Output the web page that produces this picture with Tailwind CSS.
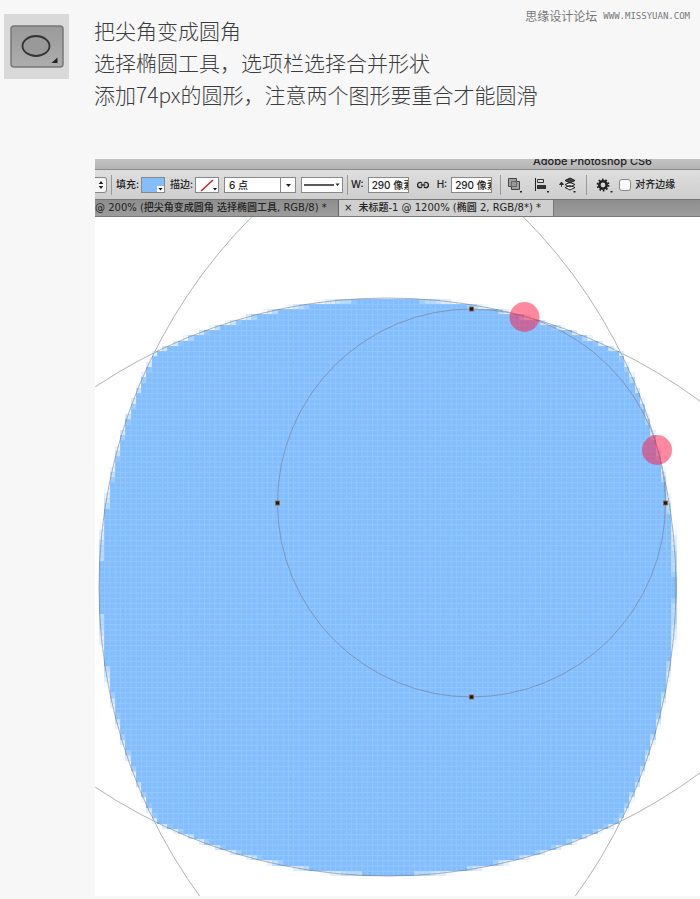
<!DOCTYPE html>
<html lang="zh-CN">
<head>
    <meta charset="UTF-8">
    <meta name="viewport" content="width=device-width, initial-scale=1.0">
    <title>把尖角变成圆角</title>
    <script src="https://cdn.jsdelivr.net/npm/@tailwindcss/browser@4"></script>
</head>
<body class="bg-[#f7f7f7] min-h-screen overflow-x-hidden font-['Noto_Sans_CJK_SC',sans-serif]">
    <!-- Intro -->
    <header class="relative flex items-start pl-1 pt-[14px] pb-[49px]">
        <div class="w-[65px] h-[65px] shrink-0 bg-[#d9d9d9] flex items-center justify-center">
            <svg class="w-[54px] h-[43px]" viewBox="0 0 54 43" aria-label="椭圆工具">
                <defs>
                    <linearGradient id="key" x1="0" y1="0" x2="0" y2="1">
                        <stop offset="0" stop-color="#9a9a9a"/>
                        <stop offset="1" stop-color="#adadad"/>
                    </linearGradient>
                </defs>
                <rect x="1" y="1" width="52" height="41" rx="3" fill="url(#key)" stroke="#777" stroke-width="1.5"/>
                <ellipse cx="26" cy="21" rx="13.5" ry="10" fill="#999" stroke="#333" stroke-width="1.8"/>
                <path d="M47.500 32.500v5.500h-6z" fill="#222"/>
            </svg>
        </div>
        <div class="ml-[25px] text-[21px] leading-8 font-light text-[#3c3c3c]">
            <h1>把尖角变成圆角</h1>
            <p>选择椭圆工具，选项栏选择合并形状</p>
            <p>添加74px的圆形，注意两个图形要重合才能圆滑</p>
        </div>
        <div class="absolute top-2 right-[10px] flex items-center gap-[6px] leading-4 text-[#777]">
            <span class="text-xs">思缘设计论坛</span>
            <a href="#" class="text-[9px] font-['DejaVu_Sans_Mono',monospace]">WWW.MISSYUAN.COM</a>
        </div>
    </header>

    <!-- Photoshop window -->
    <main class="ml-[95px] mb-[3px] bg-white text-[#222] font-['Inter','Noto_Sans_CJK_SC',sans-serif]">
        <div class="h-[10px] overflow-hidden bg-gradient-to-b from-[#c3c3c3] to-[#b3b3b3] flex items-end justify-end pr-12">
            <span class="text-[11px] leading-4 font-medium">Adobe Photoshop CS6</span>
        </div>

        <!-- Options bar -->
        <form class="h-[30px] overflow-hidden bg-gradient-to-b from-[#dedede] to-[#cecece] border-t border-[#8c8c8c] flex items-center text-[10px] font-medium whitespace-nowrap">
            <button type="button" aria-label="模式" class="w-3 h-4 shrink-0 bg-[#f5f5f5] border border-l-0 border-[#888] rounded-r-[3px] flex items-center justify-center">
                <svg class="w-[6px] h-2" viewBox="0 0 6 8" fill="#222"><path d="M3 0l2.3 3H.7zM3 8L.7 5h4.6z"/></svg>
            </button>
            <span class="w-px h-5 shrink-0 bg-[#999] mx-1"></span>
            <span>填充:</span>
            <button type="button" aria-label="填充" class="relative w-6 h-4 shrink-0 ml-[2px] bg-[#83bdfa] border border-[#888]">
                <svg class="absolute right-0 bottom-0 w-[7px] h-[6px]" viewBox="0 0 7 6"><path d="M0 0h7v6H0z" fill="#fff"/><path d="M1.5 2h4L3.500 4.500z" fill="#111"/></svg>
            </button>
            <span class="ml-[5px]">描边:</span>
            <button type="button" aria-label="描边" class="w-6 h-4 shrink-0 ml-[2px] bg-white border border-[#888]">
                <svg class="block w-[22px] h-[14px]" viewBox="0 0 22 14"><path d="M5 13L17 2" stroke="#c2202c" stroke-width="1.5"/><path d="M17 10h4l-2 2.500z" fill="#111"/></svg>
            </button>
            <label class="relative ml-[5px] shrink-0">
                <select aria-label="描边宽度" class="block appearance-none w-[72px] h-4 bg-white border border-[#888] pl-1 text-[10px] leading-[14px] outline-none">
                    <option>6 点</option>
                </select>
                <svg class="absolute right-0 top-0 w-4 h-4 pointer-events-none" viewBox="0 0 16 16"><path d="M.5 0v16" stroke="#888"/><path d="M6 7h5l-2.500 3z" fill="#222"/></svg>
            </label>
            <label class="relative ml-[5px] shrink-0">
                <select aria-label="描边类型" class="block appearance-none w-[42px] h-4 bg-white border border-[#888] outline-none"><option></option></select>
                <svg class="absolute left-0 top-0 w-[42px] h-4 pointer-events-none" viewBox="0 0 42 16"><path d="M3 8h30" stroke="#222" stroke-width="1.500"/><path d="M34.500 6.500h4l-2 2.500z" fill="#222"/></svg>
            </label>
            <span class="w-px h-5 shrink-0 bg-[#999] ml-1 mr-[3px]"></span>
            <label for="shape-w">W:</label>
            <input id="shape-w" value="290 像素" class="w-[41px] h-4 shrink-0 ml-1 pl-[3px] bg-white border border-[#888] outline-none">
            <svg class="w-3 h-2 shrink-0 mx-2" viewBox="0 0 12 8" fill="none" stroke="#222" stroke-width="1.300"><path d="M5 5.500C4.700 6.300 4 6.700 3.300 6.700A2.600 2.600 0 0 1 3.300 1.300C4.200 1.300 4.700 1.700 5 2.500M7 2.500C7.300 1.700 8 1.300 8.700 1.300A2.600 2.600 0 0 1 8.700 6.700C7.800 6.700 7.300 6.300 7 5.500M3.700 4h4.600"/></svg>
            <label for="shape-h">H:</label>
            <input id="shape-h" value="290 像素" class="w-[41px] h-4 shrink-0 ml-1 pl-[3px] bg-white border border-[#888] outline-none">
            <span class="w-px h-5 shrink-0 bg-[#999] ml-2 mr-[6px]"></span>
            <button type="button" aria-label="合并形状" class="shrink-0">
                <svg class="w-4 h-4" viewBox="0 0 16 16"><path d="M1.500 1.500h8v3h3v8h-8v-3h-3z" fill="#a0a0a0" stroke="#444"/><path d="M4.500 9.500v-5h5v5z" fill="#999" stroke="#666"/><path d="M13 14h2v1.500h-2z" fill="#222"/></svg>
            </button>
            <button type="button" aria-label="对齐" class="shrink-0 ml-[11px]">
                <svg class="w-4 h-4" viewBox="0 0 16 16"><path d="M1.500 1v13" stroke="#222"/><path d="M3.500 2.500h6v3h-6z" fill="#ddd" stroke="#333"/><path d="M3 8h9v4H3z" fill="#333"/><path d="M13 14h2v1.500h-2z" fill="#222"/></svg>
            </button>
            <button type="button" aria-label="排列" class="shrink-0 ml-[9px]">
                <svg class="w-[18px] h-4" viewBox="0 0 18 16"><path d="M2.500 10V7M.5 7.500L2.500 5l2 2.500z" fill="#222" stroke="#222" stroke-width=".8"/><path d="M6 10.500l5 2.500 5-2.500-5-2zM6 7.500l5 2.500 5-2.500-5-2z" fill="#eee" stroke="#222"/><path d="M6 3.500L11 1l5 2.500L11 6z" fill="#444" stroke="#222"/><path d="M14.500 14h2v1.500h-2z" fill="#222"/></svg>
            </button>
            <span class="w-px h-5 shrink-0 bg-[#999] mx-[9px]"></span>
            <button type="button" aria-label="设置" class="shrink-0">
                <svg class="w-[17px] h-4" viewBox="0 0 17 16"><circle cx="7" cy="8" r="3.700" fill="none" stroke="#222" stroke-width="2.600"/><circle cx="7" cy="8" r="5.500" fill="none" stroke="#222" stroke-width="1.800" stroke-dasharray="1.700 1.756"/><path d="M14.500 14h2v1.500h-2z" fill="#222"/></svg>
            </button>
            <label class="flex items-center ml-[6px]">
                <input type="checkbox" class="appearance-none w-3 h-3 mr-1 bg-[#fafafa] border border-[#888] rounded-[3px]">
                对齐边缘
            </label>
        </form>

        <!-- Document tabs -->
        <nav class="h-[18px] bg-gradient-to-b from-[#8e8e8e] to-[#9c9c9c] border-y border-[#777] flex text-[10px] leading-4 font-medium whitespace-nowrap font-['DejaVu_Sans','Noto_Sans_CJK_SC',sans-serif]">
            <button type="button" class="w-[244px] shrink-0 text-left overflow-hidden border-r border-[#666]">@ 200% (把尖角变成圆角 选择椭圆工具, RGB/8) *</button>
            <button type="button" class="w-[215px] shrink-0 text-left overflow-hidden bg-[#cfcfcf] border-r border-[#777] pl-[5px]"><span class="mr-[6px]">×</span>未标题-1 @ 1200% (椭圆 2, RGB/8*) *</button>
        </nav>

        <!-- Canvas -->
        <svg class="block w-full" viewBox="95 217 605 679">
            <defs>
                <pattern id="grid" x="99" y="298.500" width="5.250" height="5.250" patternUnits="userSpaceOnUse">
                    <path d="M0 .5h5.250M.5 0v5.250" stroke="#a3d0ff" stroke-width="1" opacity=".5"/>
                </pattern>
            </defs>
            <g id="pixels" fill="#82bdff" shape-rendering="crispEdges"></g>
            <path d="M154 353A525 525 0 0 1 621 353A525 525 0 0 1 621 821A525 525 0 0 1 154 821A525 525 0 0 1 154 353z" fill="url(#grid)"/>
            <g fill="none" stroke="#777" stroke-width="1" opacity=".55">
                <circle cx="387.500" cy="823" r="525"/>
                <circle cx="387.500" cy="351" r="525"/>
                <circle cx="624" cy="587" r="525"/>
                <circle cx="151" cy="587" r="525"/>
                <circle cx="471.500" cy="503" r="194"/>
            </g>
            <g fill="#ff1744" opacity=".5">
                <circle cx="524.500" cy="317" r="15"/>
                <circle cx="657" cy="450" r="15"/>
            </g>
            <g fill="#221a14" stroke="#8a6540" stroke-width=".8">
                <rect x="469.500" y="307" width="4" height="4"/>
                <rect x="275.500" y="501" width="4" height="4"/>
                <rect x="663.500" y="501" width="4" height="4"/>
                <rect x="469.500" y="695" width="4" height="4"/>
            </g>
        </svg>
    </main>

    <script>
        // Rasterise the rounded shape at 1200%, one rect per document pixel on the edge
        const NS = 'http://www.w3.org/2000/svg';
        const cell = 5.25, x0 = 99, y0 = 298.5, n = 110, r = 525;
        const circles = [[387.5, 823], [387.5, 351], [624, 587], [151, 587]];
        const pixels = document.getElementById('pixels');

        function inside(x, y) {
            return circles.every(([cx, cy]) => (x - cx) ** 2 + (y - cy) ** 2 <= r * r);
        }

        function coverage(x, y) {
            let hits = 0;
            for (let i = 0; i < 16; i++) {
                if (inside(x + (i % 4 + 0.5) * cell / 4, y + (Math.floor(i / 4) + 0.5) * cell / 4)) hits++;
            }
            return hits / 16;
        }

        function addRect(x, y, w, opacity) {
            const rect = document.createElementNS(NS, 'rect');
            rect.setAttribute('x', x);
            rect.setAttribute('y', y);
            rect.setAttribute('width', w);
            rect.setAttribute('height', cell);
            rect.setAttribute('fill-opacity', opacity);
            pixels.appendChild(rect);
        }

        for (let j = 0; j < n; j++) {
            const y = y0 + j * cell;
            let start = null, end = null;
            for (let i = 0; i < n; i++) {
                const x = x0 + i * cell;
                const c = coverage(x, y);
                if (c === 1) {
                    if (start === null) start = x;
                    end = x + cell;
                } else if (c > 0) {
                    addRect(x, y, cell, c * c);
                }
            }
            if (start !== null) addRect(start, y, end - start, 1);
        }
    </script>
</body>
</html>
